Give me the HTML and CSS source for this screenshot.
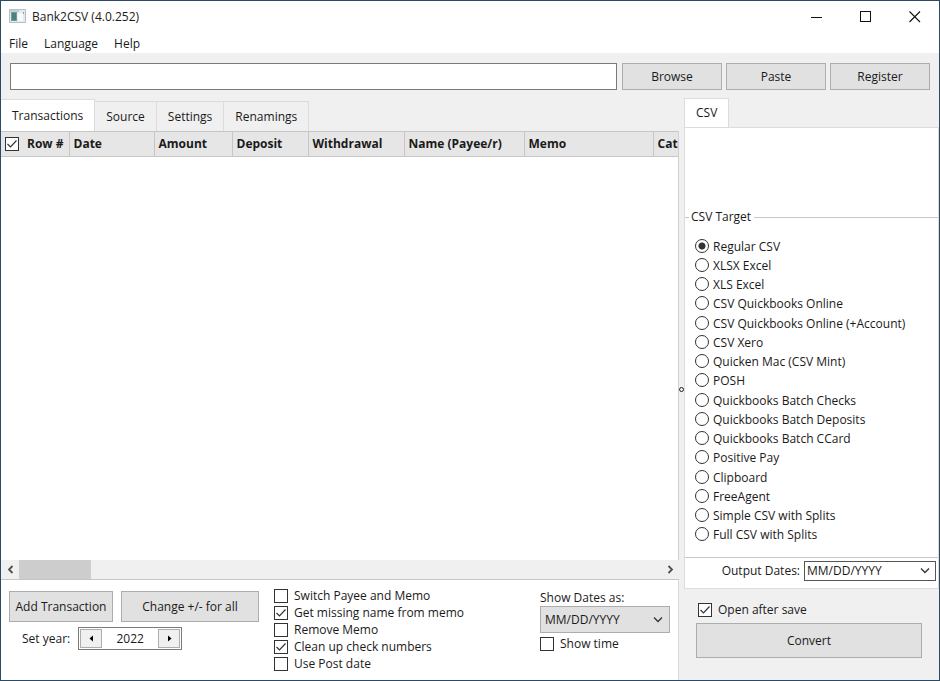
FILE: index.html
```html
<!DOCTYPE html>
<html lang="en">
<head>
    <meta charset="UTF-8">
    <meta name="viewport" content="width=device-width, initial-scale=1.0">
    <title>Bank2CSV (4.0.252)</title>
    <link rel="stylesheet" href="styles.css">
</head>
<body>
    <div class="window">
        <header class="titlebar">
            <svg class="app-icon" width="17" height="15" viewBox="0 0 17 15">
                <rect x="0.5" y="0.5" width="16" height="13" fill="#e4e9ec" stroke="#b9c0c4"/>
                <rect x="1" y="1" width="9" height="2" fill="#c3cdd2"/>
                <rect x="2" y="3" width="6" height="9" fill="#6fa09e"/>
                <rect x="3" y="4" width="4" height="7" fill="#4b827f"/>
                <rect x="9" y="4" width="5" height="8" fill="#f7f9fa"/>
                <rect x="14" y="3" width="1" height="2" fill="#7fa6a8"/>
            </svg>
            <span class="title">Bank2CSV (4.0.252)</span>
            <div class="window-buttons">
                <button class="window-btn" aria-label="Minimize"><svg width="12" height="12"><path d="M0 6.5h11" stroke="#111"/></svg></button>
                <button class="window-btn" aria-label="Maximize"><svg width="12" height="12"><rect x="0.5" y="0.5" width="10" height="10" fill="none" stroke="#111"/></svg></button>
                <button class="window-btn" aria-label="Close"><svg width="12" height="12"><path d="M0.5 0.5l10.5 10.5M11 0.5l-10.5 10.5" stroke="#111" stroke-width="1.1"/></svg></button>
            </div>
        </header>

        <nav class="menu">
            <a href="#">File</a>
            <a href="#">Language</a>
            <a href="#">Help</a>
        </nav>

        <div class="toolbar">
            <input type="text" class="file-box" aria-label="File">
            <button class="btn tool-btn">Browse</button>
            <button class="btn tool-btn">Paste</button>
            <button class="btn tool-btn">Register</button>
        </div>

        <main class="main">
            <section class="left">
                <div class="tabs">
                    <button class="tab active">Transactions</button>
                    <button class="tab">Source</button>
                    <button class="tab">Settings</button>
                    <button class="tab">Renamings</button>
                </div>

                <div class="table-box">
                    <table class="transactions">
                        <thead>
                            <tr>
                                <th class="col-row"><label class="check"><input type="checkbox" checked>Row #</label></th>
                                <th class="col-date">Date</th>
                                <th class="col-amount">Amount</th>
                                <th class="col-deposit">Deposit</th>
                                <th class="col-withdrawal">Withdrawal</th>
                                <th class="col-name">Name (Payee/r)</th>
                                <th class="col-memo">Memo</th>
                                <th class="col-category">Category</th>
                            </tr>
                        </thead>
                        <tbody></tbody>
                    </table>
                </div>

                <div class="scrollbar">
                    <button class="scroll-btn" aria-label="Scroll left"><svg width="7" height="9"><path d="M5.5 1L2 4.5L5.5 8" fill="none" stroke="#505050" stroke-width="1.8"/></svg></button>
                    <div class="scroll-track"><div class="scroll-thumb"></div></div>
                    <button class="scroll-btn" aria-label="Scroll right"><svg width="7" height="9"><path d="M1.5 1L5 4.5L1.5 8" fill="none" stroke="#505050" stroke-width="1.8"/></svg></button>
                </div>

                <div class="controls">
                    <div class="actions">
                        <div class="action-row">
                            <button class="btn add-btn">Add Transaction</button>
                            <button class="btn change-btn">Change +/- for all</button>
                        </div>
                        <div class="year-row">
                            <label for="year">Set year:</label>
                            <div class="spinner">
                                <button class="spin-btn" aria-label="Previous year"><svg width="5" height="7"><path d="M4 0.5v6L0.5 3.5z"/></svg></button>
                                <input type="text" id="year" class="year" value="2022">
                                <button class="spin-btn" aria-label="Next year"><svg width="5" height="7"><path d="M1 0.5v6L4.5 3.5z"/></svg></button>
                            </div>
                        </div>
                    </div>

                    <div class="options">
                        <label class="check"><input type="checkbox">Switch Payee and Memo</label>
                        <label class="check"><input type="checkbox" checked>Get missing name from memo</label>
                        <label class="check"><input type="checkbox">Remove Memo</label>
                        <label class="check"><input type="checkbox" checked>Clean up check numbers</label>
                        <label class="check"><input type="checkbox">Use Post date</label>
                    </div>

                    <div class="dates">
                        <label for="showDates">Show Dates as:</label>
                        <select id="showDates" class="select gray">
                            <option>MM/DD/YYYY</option>
                        </select>
                        <label class="check"><input type="checkbox">Show time</label>
                    </div>
                </div>
            </section>

            <div class="splitter"><span class="grip"></span></div>

            <section class="right">
                <div class="tabs">
                    <button class="tab active csv-tab">CSV</button>
                </div>

                <div class="csv-panel">
                    <fieldset class="target">
                        <legend>CSV Target</legend>
                        <div class="target-list">
                            <label class="radio"><input type="radio" name="target" checked>Regular CSV</label>
                            <label class="radio"><input type="radio" name="target">XLSX Excel</label>
                            <label class="radio"><input type="radio" name="target">XLS Excel</label>
                            <label class="radio"><input type="radio" name="target">CSV Quickbooks Online</label>
                            <label class="radio"><input type="radio" name="target">CSV Quickbooks Online (+Account)</label>
                            <label class="radio"><input type="radio" name="target">CSV Xero</label>
                            <label class="radio"><input type="radio" name="target">Quicken Mac (CSV Mint)</label>
                            <label class="radio"><input type="radio" name="target">POSH</label>
                            <label class="radio"><input type="radio" name="target">Quickbooks Batch Checks</label>
                            <label class="radio"><input type="radio" name="target">Quickbooks Batch Deposits</label>
                            <label class="radio"><input type="radio" name="target">Quickbooks Batch CCard</label>
                            <label class="radio"><input type="radio" name="target">Positive Pay</label>
                            <label class="radio"><input type="radio" name="target">Clipboard</label>
                            <label class="radio"><input type="radio" name="target">FreeAgent</label>
                            <label class="radio"><input type="radio" name="target">Simple CSV with Splits</label>
                            <label class="radio"><input type="radio" name="target">Full CSV with Splits</label>
                        </div>
                    </fieldset>
                    <div class="output-row">
                        <label for="outputDates">Output Dates:</label>
                        <select id="outputDates" class="select white">
                            <option>MM/DD/YYYY</option>
                        </select>
                    </div>
                </div>

                <div class="convert-box">
                    <label class="check"><input type="checkbox" checked>Open after save</label>
                    <button class="btn convert-btn">Convert</button>
                </div>
            </section>
        </main>
    </div>
</body>
</html>
```

FILE: styles.css
```css
* {
    box-sizing: border-box;
}

body {
    margin: 0;
    font-family: "Open Sans", "Noto Sans", sans-serif;
    font-size: 12px;
    line-height: 16px;
    color: #1a1a1a;
}

button, input, select {
    font: inherit;
    color: inherit;
    margin: 0;
}

.window {
    display: flex;
    flex-direction: column;
    height: 100vh;
    min-height: 600px;
    border: 1px solid #2b4a66;
    background-color: #fff;
    overflow: hidden;
}

/* title bar and menu */
.titlebar {
    display: flex;
    align-items: center;
    height: 31px;
    padding-left: 8px;
    flex-shrink: 0;
}

.title {
    margin-left: 6px;
    flex: 1;
}

.window-buttons {
    display: flex;
}

.window-btn {
    display: flex;
    align-items: center;
    justify-content: center;
    width: 49px;
    height: 30px;
    padding: 0;
    border: none;
    background: none;
}

.menu {
    display: flex;
    gap: 16px;
    height: 21px;
    padding: 4px 8px 0;
    flex-shrink: 0;
}

.menu a {
    color: inherit;
    text-decoration: none;
}

/* toolbar */
.btn {
    padding: 0;
    border: 1px solid #adadad;
    background-color: #e1e1e1;
}

.toolbar {
    display: flex;
    gap: 4px;
    padding: 10px 9px 8px;
    background-color: #f0f0f0;
    flex-shrink: 0;
}

.file-box {
    flex: 1;
    min-width: 0;
    height: 27px;
    margin-right: 1px;
    border: 1px solid #7a7a7a;
    background-color: #fff;
}

.tool-btn {
    width: 100px;
    height: 27px;
}

.main {
    display: flex;
    flex: 1;
    min-height: 0;
    background-color: #f0f0f0;
}

.left {
    display: flex;
    flex-direction: column;
    flex: 1;
    min-width: 0;
}

/* tabs */
.tabs {
    display: flex;
    align-items: flex-end;
    height: 33px;
    flex-shrink: 0;
}

.tab {
    height: 30px;
    padding: 0 11px;
    border: 1px solid #dcdcdc;
    border-left: none;
    border-bottom: none;
    background-color: #f0f0f0;
}

.tab.active {
    height: 32px;
    background-color: #fff;
}

/* table */
.table-box {
    flex: 1;
    min-height: 0;
    background-color: #fff;
    border-right: 1px solid #d0d0d0;
    overflow: hidden;
}

.transactions {
    table-layout: fixed;
    width: 100%;
    min-width: 740px;
    border-collapse: collapse;
}

.transactions th {
    height: 25px;
    padding: 0 4px;
    border: 1px solid #c6c6c6;
    border-left: none;
    background-color: #e6e6e6;
    text-align: left;
    white-space: nowrap;
}

.col-row {
    width: 68px;
}

.col-date {
    width: 85px;
}

.col-amount {
    width: 78px;
}

.col-deposit {
    width: 76px;
}

.col-withdrawal {
    width: 96px;
}

.col-name {
    width: 120px;
}

.col-memo {
    width: 129px;
}

/* horizontal scrollbar */
.scrollbar {
    display: flex;
    height: 20px;
    border-bottom: 1px solid #c6c6c6;
    flex-shrink: 0;
}

.scroll-btn {
    display: flex;
    align-items: center;
    justify-content: center;
    width: 18px;
    padding: 0;
    border: none;
    background: none;
}

.scroll-track {
    flex: 1;
}

.scroll-thumb {
    width: 72px;
    height: 100%;
    background-color: #cdcdcd;
}

/* check boxes and radio buttons */
.check, .radio {
    display: flex;
    align-items: center;
    white-space: nowrap;
}

.check input, .radio input {
    appearance: none;
    width: 14px;
    height: 14px;
    margin-right: 6px;
    border: 1px solid #333;
    background-color: #fff;
    flex-shrink: 0;
}

.check input:checked {
    background-image: url("data:image/svg+xml,%3Csvg xmlns='http://www.w3.org/2000/svg' viewBox='0 0 12 12'%3E%3Cpath d='M1.5 6L4.5 9L10.5 2.5' fill='none' stroke='%23333' stroke-width='1.2'/%3E%3C/svg%3E");
}

.radio input {
    margin: 0 4px 2px 0;
    border-radius: 50%;
}

.radio input:checked {
    background-image: radial-gradient(circle, #333 3px, #fff 4px);
}

.transactions .check input {
    margin-right: 8px;
}

/* controls under the table */
.controls {
    display: flex;
    height: 100px;
    padding: 8px 8px 7px;
    background-color: #fff;
    border-right: 1px solid #d9d9d9;
    flex-shrink: 0;
}

.actions {
    width: 265px;
    padding-top: 3px;
}

.action-row {
    display: flex;
    gap: 8px;
}

.add-btn, .change-btn {
    width: 104px;
    height: 31px;
}

.change-btn {
    width: 138px;
}

.year-row {
    display: flex;
    align-items: center;
    gap: 8px;
    margin-top: 5px;
    padding-left: 13px;
}

.spinner {
    display: flex;
    width: 104px;
    height: 23px;
    padding: 1px;
    border: 1px solid #7a7a7a;
}

.spin-btn {
    display: flex;
    align-items: center;
    justify-content: center;
    width: 22px;
    padding: 0;
    border: 1px solid #adadad;
    background-color: #f0f0f0;
}

.year {
    flex: 1;
    min-width: 0;
    padding: 0;
    border: none;
    text-align: center;
}

.options {
    display: flex;
    flex-direction: column;
    gap: 1px;
    flex: 1;
}

.dates {
    width: 130px;
    padding-top: 2px;
}

.select {
    display: block;
    appearance: none;
    width: 100%;
    height: 27px;
    padding: 0 4px;
    border: 1px solid #adadad;
    border-radius: 0;
    background: #e1e1e1 url("data:image/svg+xml,%3Csvg xmlns='http://www.w3.org/2000/svg' width='10' height='6'%3E%3Cpath d='M1 0.5L5 4.5L9 0.5' fill='none' stroke='%23333' stroke-width='1.3'/%3E%3C/svg%3E") no-repeat right 6px center;
}

.select.white {
    width: 132px;
    height: 20px;
    padding: 0 2px;
    border-color: #555;
    background-color: #fff;
    background-position: right 5px center;
}

.dates .check {
    margin-top: 3px;
}

/* splitter */
.splitter {
    display: flex;
    align-items: center;
    justify-content: center;
    width: 5px;
}

.grip {
    width: 5px;
    height: 5px;
    border: 1px solid #222;
    border-radius: 50%;
}

/* right side */
.right {
    display: flex;
    flex-direction: column;
    width: 255px;
}

.right .tabs {
    height: 29px;
}

.right .csv-tab {
    height: 29px;
    border-left: 1px solid #dcdcdc;
}

.csv-panel {
    display: flex;
    flex-direction: column;
    flex: 1;
    min-height: 0;
    padding-top: 81px;
    border: 1px solid #dcdcdc;
    background-color: #fff;
}

.target {
    flex: 1;
    min-width: 0;
    margin: 0;
    padding: 12px 10px;
    border: 1px solid #c8c8c8;
    border-width: 1px 0;
}

.target legend {
    margin-left: -6px;
    padding: 0 3px 0 2px;
}

.target-list {
    display: grid;
    grid-auto-rows: 1fr;
    height: 100%;
}

.output-row {
    display: flex;
    align-items: center;
    justify-content: flex-end;
    gap: 4px;
    height: 30px;
    padding: 0 2px 4px 0;
}

.convert-box {
    height: 91px;
    padding: 13px 17px 0 12px;
    flex-shrink: 0;
}

.convert-box .check {
    padding-left: 2px;
}

.convert-btn {
    width: 100%;
    height: 35px;
    margin-top: 5px;
}
```
